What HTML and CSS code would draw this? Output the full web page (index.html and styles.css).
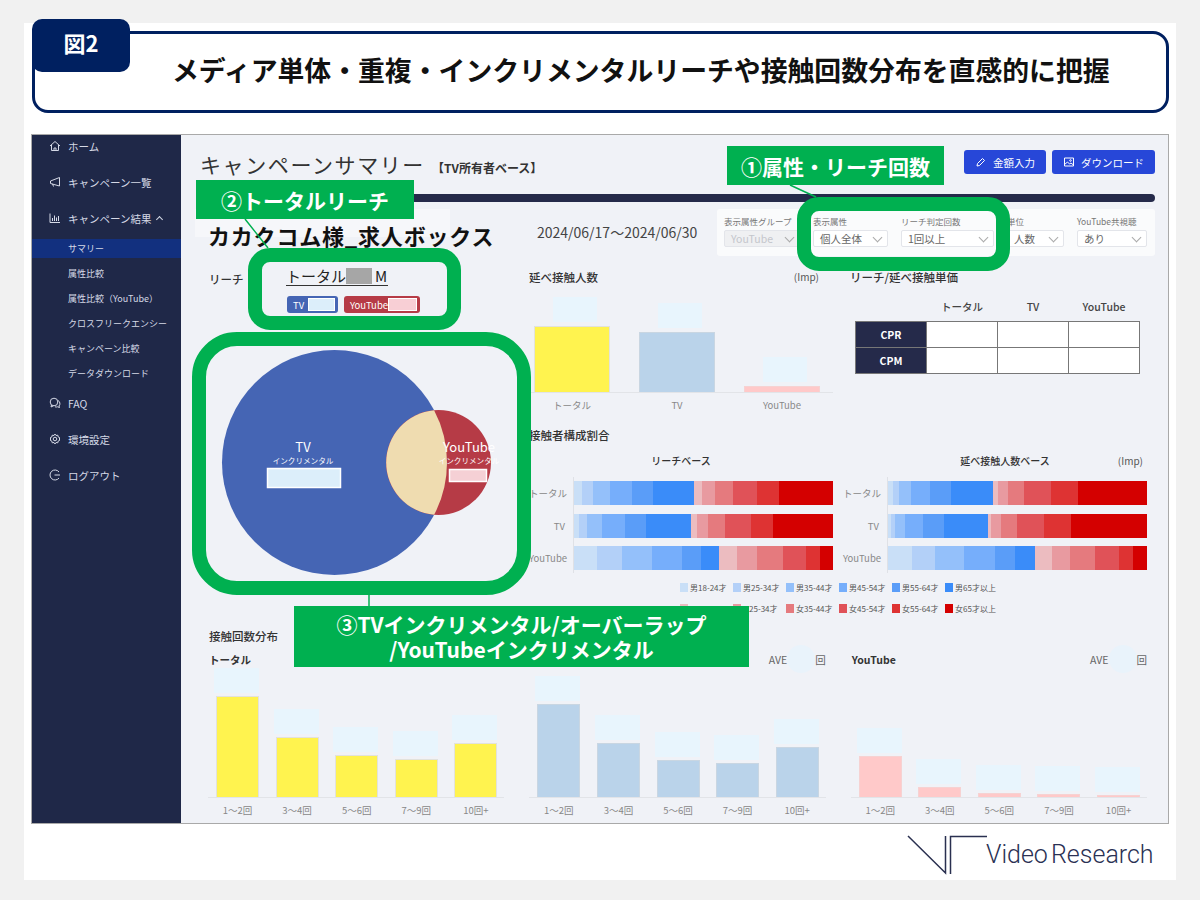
FILE: index.html
```html
<!DOCTYPE html>
<html lang="ja">
  <head>
    <meta charset="UTF-8" />
    <title>キャンペーンサマリー</title>
    <link rel="stylesheet" href="styles.css">
  </head>
  <body>
    <div class="slide">
      <header class="head">
        <div class="tag">図2</div>
        <h1>メディア単体・重複・インクリメンタルリーチや接触回数分布を直感的に把握</h1>
      </header>

      <div class="app">
        <nav class="side">
          <a class="nav-item"><svg viewBox="0 0 12 12"><path d="M1 6 6 1.500 11 6M2.500 5v5.500h7V5M5 10.500V8h2v2.500"/></svg>ホーム</a>
          <a class="nav-item"><svg viewBox="0 0 12 12"><path d="M1.500 5 10.500 1.500v8.500L1.500 7.500zM3.500 7.800 4.500 10.500"/></svg>キャンペーン一覧</a>
          <a class="nav-item"><svg viewBox="0 0 12 12"><path d="M1 1.500V10.500H11M3.500 9V6M5.500 9V3.500M7.500 9V5.500M9.500 9V4"/></svg>キャンペーン結果<span class="caret"></span></a>
          <div class="sub">
            <a class="sub-item active">サマリー</a>
            <a class="sub-item">属性比較</a>
            <a class="sub-item">属性比較（YouTube）</a>
            <a class="sub-item">クロスフリークエンシー</a>
            <a class="sub-item">キャンペーン比較</a>
            <a class="sub-item">データダウンロード</a>
          </div>
          <a class="nav-item"><svg viewBox="0 0 12 12"><circle cx="5" cy="5" r="3.800"/><path d="M2.500 8 2 10 4.500 8.800M9 3.500a3.500 3.500 0 0 1 1 5.500l.5 1.500-2-.7a3.500 3.500 0 0 1-2.500 0"/></svg>FAQ</a>
          <a class="nav-item"><svg viewBox="0 0 12 12"><circle cx="6" cy="6" r="1.800"/><path d="M6 1 7 2.500 8.800 2.200 9.200 4 11 5 10 6 11 7 9.200 8 8.800 9.800 7 9.500 6 11 5 9.500 3.200 9.800 2.800 8 1 7 2 6 1 5 2.800 4 3.200 2.200 5 2.500z"/></svg>環境設定</a>
          <a class="nav-item"><svg viewBox="0 0 12 12"><path d="M10 3a5 5 0 1 0 0 6M5.500 6H11"/></svg>ログアウト</a>
        </nav>

        <main class="main">
          <div class="title-row">
            <div class="page-title">キャンペーンサマリー<span class="base">【TV所有者ベース】</span></div>
            <div class="actions">
              <button class="btn"><svg viewBox="0 0 12 12"><path d="M2 10 2.500 7.500 7.500 2.500 9.500 4.500 4.500 9.500z"/></svg>金額入力</button>
              <button class="btn"><svg viewBox="0 0 12 12"><path d="M1.500 2h9v8h-9zM1.500 8.500 4.500 6l2 2 1.500-1 2.500 2"/><circle cx="7.500" cy="4.500" r=".8"/></svg>ダウンロード</button>
            </div>
          </div>
          <div class="rule"></div>

          <div class="info">
            <div class="client">カカクコム様_求人ボックス</div>
            <div class="period">2024/06/17～2024/06/30</div>
            <div class="filters">
              <div class="filter"><label>表示属性グループ</label><div class="select off">YouTube</div></div>
              <div class="filter"><label>表示属性</label><div class="select">個人全体</div></div>
              <div class="filter"><label>リーチ判定回数</label><div class="select">1回以上</div></div>
              <div class="filter"><label>単位</label><div class="select">人数</div></div>
              <div class="filter"><label>YouTube共視聴</label><div class="select">あり</div></div>
            </div>
          </div>

          <div class="dash">
            <section class="reach">
              <div class="reach-row">
                <h2>リーチ</h2>
                <div>
                  <div class="total">トータル<span class="mask"></span>M</div>
                  <div class="pills">
                    <span class="pill tv">TV<i></i></span>
                    <span class="pill yt">YouTube<i></i></span>
                  </div>
                </div>
              </div>
              <svg class="venn" viewBox="0 0 312 240" width="312" height="240">
                <circle cx="126.500" cy="121.500" r="112.500" fill="#4565b4"/>
                <circle cx="230.500" cy="121.500" r="52.500" fill="#b63b46"/>
                <path d="M226.100 69.200A112.500 112.500 0 0 1 226.100 173.800A52.500 52.500 0 0 1 226.100 69.200Z" fill="#efdcb0"/>
                <text class="venn-name" x="95" y="111">TV</text>
                <text class="venn-sub" x="95" y="123">インクリメンタル</text>
                <rect x="59.500" y="127.500" width="73" height="19" fill="#dceefa" stroke="#fff" stroke-width="1.500"/>
                <text class="venn-name" x="261" y="111">YouTube</text>
                <text class="venn-sub" x="261" y="123">インクリメンタル</text>
                <rect x="241.500" y="128.500" width="37" height="12" fill="#f5d0d5" stroke="#fff" stroke-width="1.500"/>
              </svg>
            </section>

            <div class="charts">
              <div class="charts-top">
                <section>
                  <div class="panel-head"><h2>延べ接触人数</h2><span class="unit">(Imp)</span></div>
                  <div class="plot imp">
                    <div class="col"><span class="val"></span><span class="bar yellow" style="height:66px"></span></div>
                    <div class="col"><span class="val"></span><span class="bar blue" style="height:60px"></span></div>
                    <div class="col"><span class="val"></span><span class="bar pink" style="height:6px"></span></div>
                  </div>
                  <div class="ticks imp"><span>トータル</span><span>TV</span><span>YouTube</span></div>
                </section>
                <section>
                  <div class="panel-head"><h2>リーチ/延べ接触単価</h2></div>
                  <table class="cost">
                    <tr><th></th><th>トータル</th><th>TV</th><th>YouTube</th></tr>
                    <tr><th class="key">CPR</th><td></td><td></td><td></td></tr>
                    <tr><th class="key">CPM</th><td></td><td></td><td></td></tr>
                  </table>
                </section>
              </div>

              <section class="share">
                <h2>接触者構成割合</h2>
                <div class="share-grid">
                  <div>
                    <div class="share-head">リーチベース</div>
                    <div class="stack-chart">
                      <div class="stack-labels"><span>トータル</span><span>TV</span><span>YouTube</span></div>
                      <div class="stacks">
                        <div class="stack"><i class="c1" style="width:2.9%"></i><i class="c2" style="width:4.4%"></i><i class="c3" style="width:6.5%"></i><i class="c4" style="width:8.7%"></i><i class="c5" style="width:8.1%"></i><i class="c6" style="width:15.7%"></i><i class="c7" style="width:3.2%"></i><i class="c8" style="width:4.9%"></i><i class="c9" style="width:7%"></i><i class="c10" style="width:9.4%"></i><i class="c11" style="width:8.3%"></i><i class="c12" style="width:21%"></i></div>
                        <div class="stack"><i class="c1" style="width:1.8%"></i><i class="c2" style="width:3.4%"></i><i class="c3" style="width:5.5%"></i><i class="c4" style="width:8.9%"></i><i class="c5" style="width:8.3%"></i><i class="c6" style="width:17.2%"></i><i class="c7" style="width:2.3%"></i><i class="c8" style="width:4.5%"></i><i class="c9" style="width:6.6%"></i><i class="c10" style="width:9.9%"></i><i class="c11" style="width:8.6%"></i><i class="c12" style="width:23.1%"></i></div>
                        <div class="stack"><i class="c1" style="width:8.7%"></i><i class="c2" style="width:9.9%"></i><i class="c3" style="width:11.7%"></i><i class="c4" style="width:11.5%"></i><i class="c5" style="width:7.4%"></i><i class="c6" style="width:6.8%"></i><i class="c7" style="width:7%"></i><i class="c8" style="width:7.9%"></i><i class="c9" style="width:9.9%"></i><i class="c10" style="width:8.9%"></i><i class="c11" style="width:5.5%"></i><i class="c12" style="width:4.9%"></i></div>
                      </div>
                    </div>
                  </div>
                  <div>
                    <div class="share-head">延べ接触人数ベース<span class="unit">(Imp)</span></div>
                    <div class="stack-chart">
                      <div class="stack-labels"><span>トータル</span><span>TV</span><span>YouTube</span></div>
                      <div class="stacks">
                        <div class="stack"><i class="c1" style="width:1.8%"></i><i class="c2" style="width:2.6%"></i><i class="c3" style="width:4.4%"></i><i class="c4" style="width:7.6%"></i><i class="c5" style="width:7.8%"></i><i class="c6" style="width:16.2%"></i><i class="c7" style="width:2.1%"></i><i class="c8" style="width:3.7%"></i><i class="c9" style="width:6.5%"></i><i class="c10" style="width:10.4%"></i><i class="c11" style="width:10.2%"></i><i class="c12" style="width:26.7%"></i></div>
                        <div class="stack"><i class="c1" style="width:1%"></i><i class="c2" style="width:1.9%"></i><i class="c3" style="width:3.7%"></i><i class="c4" style="width:7.1%"></i><i class="c5" style="width:7.8%"></i><i class="c6" style="width:17.2%"></i><i class="c7" style="width:1.1%"></i><i class="c8" style="width:3.7%"></i><i class="c9" style="width:6.2%"></i><i class="c10" style="width:10.5%"></i><i class="c11" style="width:10.5%"></i><i class="c12" style="width:29.2%"></i></div>
                        <div class="stack"><i class="c1" style="width:9.1%"></i><i class="c2" style="width:8.9%"></i><i class="c3" style="width:11.2%"></i><i class="c4" style="width:12.3%"></i><i class="c5" style="width:7.6%"></i><i class="c6" style="width:7.6%"></i><i class="c7" style="width:6.5%"></i><i class="c8" style="width:7%"></i><i class="c9" style="width:9.9%"></i><i class="c10" style="width:9.1%"></i><i class="c11" style="width:5.5%"></i><i class="c12" style="width:5.3%"></i></div>
                      </div>
                    </div>
                  </div>
                </div>
                <div class="legend">
                  <span><i class="c1"></i>男18-24才</span><span><i class="c2"></i>男25-34才</span><span><i class="c3"></i>男35-44才</span><span><i class="c4"></i>男45-54才</span><span><i class="c5"></i>男55-64才</span><span><i class="c6"></i>男65才以上</span>
                  <span><i class="c7"></i></span><span><i class="c8"></i><em class="cut">25-34才</em></span><span><i class="c9"></i>女35-44才</span><span><i class="c10"></i>女45-54才</span><span><i class="c11"></i>女55-64才</span><span><i class="c12"></i>女65才以上</span>
                </div>
              </section>
            </div>
          </div>

          <section class="freq">
            <h2>接触回数分布</h2>
            <div class="freq-grid">
              <div>
                <div class="freq-head"><h3>トータル</h3></div>
                <div class="plot count">
                  <div class="col"><span class="val"></span><span class="bar yellow" style="height:101px"></span></div>
                  <div class="col"><span class="val"></span><span class="bar yellow" style="height:60px"></span></div>
                  <div class="col"><span class="val"></span><span class="bar yellow" style="height:42px"></span></div>
                  <div class="col"><span class="val"></span><span class="bar yellow" style="height:38px"></span></div>
                  <div class="col"><span class="val"></span><span class="bar yellow" style="height:54px"></span></div>
                </div>
                <div class="ticks count"><span>1～2回</span><span>3～4回</span><span>5～6回</span><span>7～9回</span><span>10回+</span></div>
              </div>
              <div>
                <div class="freq-head"><div class="ave">AVE<span class="ave-dot"></span>回</div></div>
                <div class="plot count">
                  <div class="col"><span class="val"></span><span class="bar blue" style="height:93px"></span></div>
                  <div class="col"><span class="val"></span><span class="bar blue" style="height:54px"></span></div>
                  <div class="col"><span class="val"></span><span class="bar blue" style="height:37px"></span></div>
                  <div class="col"><span class="val"></span><span class="bar blue" style="height:34px"></span></div>
                  <div class="col"><span class="val"></span><span class="bar blue" style="height:50px"></span></div>
                </div>
                <div class="ticks count"><span>1～2回</span><span>3～4回</span><span>5～6回</span><span>7～9回</span><span>10回+</span></div>
              </div>
              <div>
                <div class="freq-head"><h3>YouTube</h3><div class="ave">AVE<span class="ave-dot"></span>回</div></div>
                <div class="plot count">
                  <div class="col"><span class="val"></span><span class="bar pink" style="height:41px"></span></div>
                  <div class="col"><span class="val"></span><span class="bar pink" style="height:10px"></span></div>
                  <div class="col"><span class="val"></span><span class="bar pink" style="height:4px"></span></div>
                  <div class="col"><span class="val"></span><span class="bar pink" style="height:3px"></span></div>
                  <div class="col"><span class="val"></span><span class="bar pink" style="height:2px"></span></div>
                </div>
                <div class="ticks count"><span>1～2回</span><span>3～4回</span><span>5～6回</span><span>7～9回</span><span>10回+</span></div>
              </div>
            </div>
          </section>
        </main>
      </div>

      <footer class="foot">
        <svg class="logo" viewBox="0 0 82 40" width="82" height="40"><path d="M1 1 38.500 38V1M43.500 39V1.500H80"/></svg>
        <span class="brand">Video Research</span>
      </footer>

      <!-- annotations laid over the screenshot -->
      <svg class="links" viewBox="0 0 1152 857" width="1152" height="857">
        <path d="M221 196 244 225M766 162 792 174M345 572V583"/>
      </svg>
      <div class="frame frame-attr"></div>
      <div class="frame frame-total"></div>
      <div class="frame frame-venn"></div>
      <div class="note note-attr">①属性・リーチ回数</div>
      <div class="note note-total">②トータルリーチ</div>
      <div class="note note-venn">③TVインクリメンタル/オーバーラップ<br>/YouTubeインクリメンタル</div>
    </div>
  </body>
</html>
```
FILE: styles.css
```css
* {
  box-sizing: border-box;
}

body {
  margin: 0;
  background-color: #f1f1f1;
  font-family: "Noto Sans CJK JP", "Noto Sans", sans-serif;
  color: #333;
}

h1, h2, h3 {
  margin: 0;
}

.slide {
  position: relative;
  width: 1152px;
  height: 857px;
  margin: 23px 24px;
  padding: 8px 0 0 8px;
  background-color: white;
}

/* heading */
.head {
  position: relative;
  display: flex;
  align-items: center;
  width: 1137px;
  height: 82px;
  padding: 0 0 5px 137px;
  border: 3px solid #002060;
  border-radius: 16px;
}

.head h1 {
  font-size: 26.850px;
  font-weight: 700;
  color: #111;
  white-space: nowrap;
}

.tag {
  position: absolute;
  left: -3px;
  top: -15px;
  width: 98px;
  height: 53px;
  padding-top: 7px;
  border-radius: 10px;
  background-color: #002060;
  color: white;
  font-size: 22px;
  font-weight: 700;
  line-height: 32px;
  text-align: center;
}

/* app screenshot */
.app {
  display: flex;
  width: 1138px;
  height: 690px;
  margin: 21px 0 0 -1px;
  border: 1px solid #a9a9a9;
}

.side {
  flex: none;
  width: 149px;
  background-color: #1f2848;
  color: #d5d9e6;
}

.nav-item {
  display: flex;
  align-items: center;
  height: 22px;
  margin-bottom: 14px;
  padding-left: 17px;
  font-size: 10.500px;
}

.nav-item svg {
  width: 12px;
  height: 12px;
  margin-right: 7px;
  fill: none;
  stroke: #d5d9e6;
  stroke-width: 1;
}

.caret {
  width: 5px;
  height: 5px;
  margin: 3px 0 0 6px;
  border-top: 1.500px solid #d5d9e6;
  border-left: 1.500px solid #d5d9e6;
  transform: rotate(45deg);
}

.sub {
  display: flex;
  flex-direction: column;
  gap: 6px;
  margin: -4px 0 9px;
}

.sub-item {
  height: 19px;
  padding-left: 36px;
  font-size: 9px;
  line-height: 19px;
  white-space: nowrap;
}

.sub-item.active {
  background-color: #12307f;
}

.main {
  flex: 1;
  padding: 0 13px 0 27px;
  background-color: #f0f2f7;
}

.title-row {
  display: flex;
  justify-content: space-between;
  height: 59px;
  margin-left: -8px;
}

.page-title {
  padding-top: 12px;
  font-size: 21px;
  line-height: 34px;
  letter-spacing: 1.600px;
  white-space: nowrap;
}

.base {
  margin-left: 7px;
  font-size: 12px;
  font-weight: 700;
  letter-spacing: 0;
}

.actions {
  display: flex;
  gap: 6px;
  padding-top: 15px;
}

.btn {
  display: flex;
  align-items: center;
  justify-content: center;
  gap: 6px;
  height: 24px;
  padding: 0 11px;
  border: none;
  border-radius: 3px;
  background-color: #2747d8;
  color: white;
  font-family: inherit;
  font-size: 10.500px;
}

.btn svg {
  width: 12px;
  height: 12px;
  fill: none;
  stroke: white;
  stroke-width: 1;
}

.rule {
  height: 8px;
  margin-left: -8px;
  border-radius: 4px;
  background-color: #252a4a;
}

.info {
  display: flex;
  height: 47px;
  margin-top: 7px;
}

.client {
  width: 255px;
  height: 28px;
  margin-left: -13px;
  padding-left: 13px;
  background-color: #f6f7fa;
  color: #111;
  font-size: 22px;
  font-weight: 700;
  line-height: 52px;
  letter-spacing: 0.800px;
  white-space: nowrap;
}

.period {
  margin-left: 87px;
  padding-top: 13px;
  font-size: 14px;
  line-height: 20px;
  color: #444;
  white-space: nowrap;
}

.filters {
  display: grid;
  grid-template-columns: 76px 75px 93px 57px 70px;
  column-gap: 13px;
  width: 438px;
  margin-left: auto;
  padding: 6px 0 0 7px;
  border-radius: 3px;
  background-color: #fafbfc;
}

.filter label {
  display: block;
  height: 12px;
  margin-bottom: 3px;
  font-size: 8.500px;
  line-height: 12px;
  color: #777;
  white-space: nowrap;
}

.select {
  position: relative;
  height: 17px;
  padding-left: 6px;
  border: 1px solid #e3e5ea;
  border-radius: 2px;
  background-color: white;
  font-size: 10.500px;
  line-height: 15px;
  color: #666;
  white-space: nowrap;
}

.select::after {
  content: "";
  position: absolute;
  right: 6px;
  top: 3px;
  width: 6px;
  height: 6px;
  border-right: 1px solid #aaa;
  border-bottom: 1px solid #aaa;
  transform: rotate(45deg);
}

.select.off {
  background-color: #eff0f2;
  color: #c4c6cc;
}

/* charts */
.dash {
  display: flex;
  margin-top: 13px;
}

.reach {
  flex: none;
  width: 321px;
}

h2 {
  width: fit-content;
  font-size: 11.500px;
  font-weight: 500;
  line-height: 16px;
  color: #333;
  white-space: nowrap;
}

.reach-row {
  display: flex;
}

.reach-row h2 {
  width: 78px;
  padding: 2px 0 0 1px;
}

.total {
  display: flex;
  align-items: center;
  width: 102px;
  height: 19px;
  margin-top: -2px;
  border-bottom: 1.500px solid #333;
  font-size: 15px;
  line-height: 18px;
  color: #222;
  white-space: nowrap;
}

.mask {
  flex: none;
  width: 26px;
  height: 16px;
  margin-right: 3px;
  background-color: #a6a6a6;
}

.pills {
  display: flex;
  gap: 6px;
  margin: 10px 0 0 1px;
}

.pill {
  display: flex;
  align-items: center;
  justify-content: space-between;
  height: 17px;
  padding: 0 3px 0 6px;
  border-radius: 3px;
  color: white;
  font-size: 9.500px;
}

.pill i {
  height: 13px;
  border: 1px solid white;
}

.pill.tv {
  width: 51px;
  background-color: #4565b4;
}

.pill.tv i {
  width: 27px;
  background-color: #dceefa;
}

.pill.yt {
  width: 76px;
  background-color: #b63b46;
}

.pill.yt i {
  width: 30px;
  background-color: #f8cfd5;
}

.venn {
  display: block;
  margin-top: 28px;
}

.venn text {
  fill: white;
  text-anchor: middle;
}

.venn-name {
  font-size: 13px;
}

.venn-sub {
  font-size: 7.600px;
}

.charts {
  flex: none;
  width: 618px;
}

.charts-top {
  display: grid;
  grid-template-columns: 304px 297px;
  column-gap: 17px;
  height: 142px;
}

.panel-head {
  display: flex;
  justify-content: space-between;
  padding-right: 14px;
}

.unit {
  font-size: 10px;
  line-height: 16px;
  color: #555;
}

.plot {
  display: flex;
  align-items: flex-end;
  border-bottom: 1px solid #e2e4e8;
}

.plot.imp {
  gap: 29px;
  height: 97px;
  margin-top: 11px;
  padding-left: 5px;
}

.plot.count {
  gap: 16.600px;
  height: 130px;
  margin-top: 2px;
  padding-left: 8px;
}

.col {
  display: flex;
  flex-direction: column;
  flex: none;
}

.plot.imp .col {
  width: 76px;
}

.plot.count .col {
  width: 43px;
}

.val {
  flex: none;
  height: 25px;
  background-color: #e8f5fd;
}

.plot.imp .val {
  width: 44px;
  margin: 0 0 4px 19px;
}

.plot.count .val {
  margin: 0 0 3px -2px;
}

.bar {
  display: block;
  border: 1px solid #e2e2dc;
  border-bottom: none;
}

.bar.yellow {
  background-color: #fff34f;
}

.bar.blue {
  background-color: #bad3ea;
  border-color: #c9d6e2;
}

.bar.pink {
  background-color: #ffc9c9;
  border-color: #f6d2d2;
}

.ticks {
  display: flex;
  margin-top: 5px;
  font-size: 9.500px;
  line-height: 14px;
  color: #888;
  text-align: center;
  white-space: nowrap;
}

.ticks.imp {
  gap: 29px;
  padding-left: 5px;
}

.ticks.imp span {
  width: 76px;
}

.ticks.count {
  gap: 16.600px;
  padding-left: 8px;
}

.ticks.count span {
  width: 43px;
}

.cost {
  margin: 14px 0 0 5px;
  border-collapse: collapse;
  font-size: 10.500px;
}

.cost th {
  height: 22px;
  padding: 0 0 6px;
  font-weight: 500;
  color: #444;
}

.cost td,
.cost .key {
  width: 71px;
  height: 26px;
  padding: 0;
  border: 1px solid #777;
  background-color: white;
}

.cost .key {
  background-color: #252a4a;
  color: white;
  font-weight: 700;
}

.share {
  margin-top: 16px;
}

.share-grid {
  display: grid;
  grid-template-columns: 304px 304px;
  column-gap: 10px;
}

.share-head {
  position: relative;
  margin-top: 11px;
  font-size: 10px;
  font-weight: 500;
  line-height: 14px;
  text-align: center;
}

.share-grid > div + div .share-head {
  padding-left: 20px;
}

.share-head .unit {
  position: absolute;
  right: 4px;
  top: -1px;
  font-weight: 400;
}

.stack-chart {
  display: flex;
  margin-top: 9px;
}

.stack-labels {
  display: flex;
  flex-direction: column;
  gap: 8.500px;
  width: 36px;
  margin-right: 8px;
  padding-top: 4px;
  font-size: 9.500px;
  line-height: 24px;
  color: #888;
  text-align: right;
  white-space: nowrap;
}

.stacks {
  display: flex;
  flex-direction: column;
  gap: 8.500px;
  flex: 1;
  height: 96px;
  padding-top: 4px;
  border-left: 1px solid #dfe1e6;
}

.stack {
  display: flex;
  height: 24px;
}

.stack i {
  display: block;
}

.c1 { background-color: #c9dff7; }
.c2 { background-color: #b3d0f8; }
.c3 { background-color: #94c0fa; }
.c4 { background-color: #76aefb; }
.c5 { background-color: #5a9df8; }
.c6 { background-color: #3a8cf9; }
.c7 { background-color: #ecbcc0; }
.c8 { background-color: #e89aa0; }
.c9 { background-color: #e57a7e; }
.c10 { background-color: #e05258; }
.c11 { background-color: #de3333; }
.c12 { background-color: #d40000; }

.legend {
  display: grid;
  grid-template-columns: repeat(6, 53px);
  row-gap: 7px;
  margin: 7px 0 0 151px;
}

.legend span {
  display: flex;
  align-items: center;
  gap: 2px;
  height: 14px;
  font-size: 8px;
  color: #555;
  white-space: nowrap;
}

.legend i {
  width: 8px;
  height: 9px;
}

/* only the tail of this label sticks out from under note 3 */
.legend .cut {
  margin-left: 6px;
  font-style: normal;
}

.freq {
  margin-top: 13px;
}

.freq h2 {
  padding-left: 1px;
}

.freq-grid {
  display: grid;
  grid-template-columns: repeat(3, 1fr);
  column-gap: 25px;
  width: 939px;
}

.freq-head {
  display: flex;
  align-items: center;
  justify-content: space-between;
  height: 14px;
  margin-top: 8px;
}

.freq-head h3 {
  padding-left: 1px;
  font-size: 10.500px;
  font-weight: 700;
}

.ave {
  display: flex;
  align-items: center;
  margin-left: auto;
  font-size: 10.500px;
  color: #666;
}

.ave-dot {
  width: 28px;
  height: 28px;
  margin: -7px 0;
  border-radius: 50%;
  background-color: #e9f3fb;
}

/* logo */
.foot {
  display: flex;
  justify-content: flex-end;
  align-items: center;
  margin-top: 11px;
  padding-right: 24px;
}

.logo {
  margin-right: -3px;
  fill: none;
  stroke: #2a3050;
  stroke-width: 1.500;
}

.brand {
  width: 166px;
  font-family: Roboto, sans-serif;
  font-size: 25px;
  font-weight: 300;
  line-height: 40px;
  word-spacing: -3px;
  color: #2a3154;
  white-space: nowrap;
}

/* annotations */
.links {
  position: absolute;
  left: 0;
  top: 0;
  fill: none;
  stroke: #00b050;
  stroke-width: 1.500;
}

.frame {
  position: absolute;
  border: 14px solid #00b050;
}

.frame-attr {
  left: 773px;
  top: 174px;
  width: 213px;
  height: 74px;
  border-radius: 22px;
}

.frame-total {
  left: 224px;
  top: 225px;
  width: 213px;
  height: 82px;
  border-radius: 22px;
}

.frame-venn {
  left: 168px;
  top: 309px;
  width: 339px;
  height: 263px;
  border-radius: 45px;
}

.note {
  position: absolute;
  display: flex;
  align-items: center;
  justify-content: center;
  background-color: #00b050;
  color: white;
  font-size: 21px;
  font-weight: 700;
  text-align: center;
  white-space: nowrap;
}

.note-attr {
  left: 703px;
  top: 123px;
  width: 217px;
  height: 39px;
}

.note-total {
  left: 172px;
  top: 157px;
  width: 218px;
  height: 39px;
}

.note-venn {
  left: 270px;
  top: 583px;
  width: 455px;
  height: 61px;
  line-height: 25px;
}
```
